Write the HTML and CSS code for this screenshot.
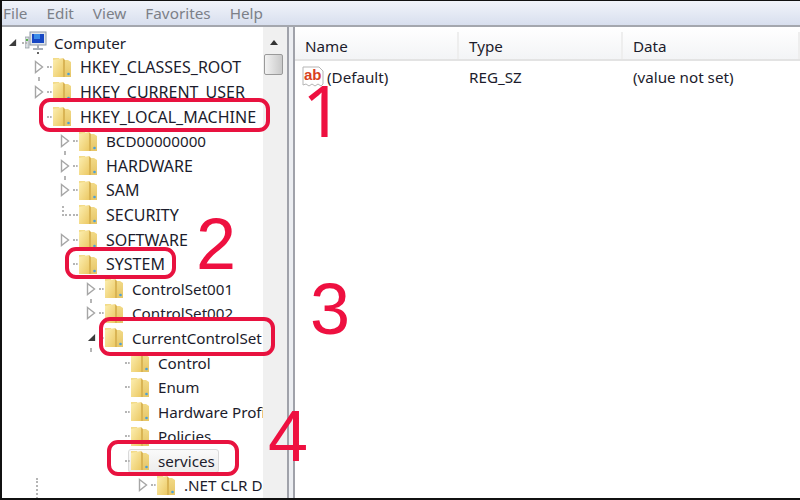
FILE: index.html
```html
<!DOCTYPE html>
<html lang="en">
<head>
  <meta charset="UTF-8">
  <title>Registry Editor</title>
  <link rel="stylesheet" href="styles.css">
</head>
<body>
  <svg class="defs" width="0" height="0">
    <defs>
      <linearGradient id="fold" x1="0" y1="0" x2="1" y2="1">
        <stop offset="0" stop-color="#fcefb2"/>
        <stop offset="1" stop-color="#ecc964"/>
      </linearGradient>
      <linearGradient id="foldBack" x1="0" y1="0" x2="0" y2="1">
        <stop offset="0" stop-color="#f3dc8a"/>
        <stop offset="1" stop-color="#e6c566"/>
      </linearGradient>
      <symbol id="folder" viewBox="0 0 18 21">
        <path d="M0 1h6l1 2h8l3 2v15H0z" fill="url(#foldBack)"/>
        <path d="M0 3l10-2v19H0z" fill="url(#fold)"/>
        <path d="M10 1l2 2v17h-2z" fill="#d9b454"/>
        <circle cx="15.5" cy="17" r="1.3" fill="#4aa0d8"/>
      </symbol>
      <symbol id="open" viewBox="0 0 10 14">
        <path d="M1.5 1.5l7 5.5-7 5.5z" fill="#fff" stroke="#a6a6a6" stroke-width="1.4"/>
      </symbol>
      <symbol id="shut" viewBox="0 0 10 10">
        <path d="M9 1v8H1z" fill="#3c3c3c"/>
      </symbol>
    </defs>
  </svg>

  <div class="window">
    <div class="menu">
      <span>File</span>
      <span>Edit</span>
      <span>View</span>
      <span>Favorites</span>
      <span>Help</span>
    </div>

    <div class="panes">
      <div class="tree">
        <div class="rows">
          <div class="row top">
            <svg class="arrow small"><use href="#shut"/></svg>
            <i class="dots short"></i>
            <svg class="computer" viewBox="0 0 22 24">
              <rect x="0" y="6" width="4" height="11" fill="#d9dde2" stroke="#8c949c" stroke-width=".7"/>
              <rect x="1" y="8" width="2" height="2" fill="#58b04a"/>
              <rect x="5" y="1" width="16" height="13" fill="#dfe5ec" stroke="#8f9aa6"/>
              <rect x="7" y="3" width="12" height="9" fill="#1747c4"/>
              <path d="M9 3h6v5H9z" fill="#3b8ce8"/>
              <path d="M12 14h2v3h-2zM8 17h10v2H8z" fill="#a8b0b8"/>
              <rect x="12" y="21" width="2" height="2" fill="#666"/>
            </svg>
            <span class="label">Computer</span>
          </div>
          <div class="row l1"><svg class="arrow"><use href="#open"/></svg><i class="dots stem"></i><svg class="folder"><use href="#folder"/></svg><span class="label caps">HKEY_CLASSES_ROOT</span></div>
          <div class="row l1"><svg class="arrow"><use href="#open"/></svg><i class="dots"></i><svg class="folder"><use href="#folder"/></svg><span class="label caps">HKEY_CURRENT_USER</span></div>
          <div class="row l1"><i class="arrow"></i><i class="dots"></i><svg class="folder"><use href="#folder"/></svg><span class="label caps">HKEY_LOCAL_MACHINE</span></div>
          <div class="row l2"><svg class="arrow"><use href="#open"/></svg><i class="dots stem"></i><svg class="folder"><use href="#folder"/></svg><span class="label">BCD00000000</span></div>
          <div class="row l2"><svg class="arrow"><use href="#open"/></svg><i class="dots stem"></i><svg class="folder"><use href="#folder"/></svg><span class="label caps">HARDWARE</span></div>
          <div class="row l2"><svg class="arrow"><use href="#open"/></svg><i class="dots"></i><svg class="folder"><use href="#folder"/></svg><span class="label caps">SAM</span></div>
          <div class="row l2"><i class="arrow"></i><i class="dots long"></i><svg class="folder"><use href="#folder"/></svg><span class="label caps">SECURITY</span></div>
          <div class="row l2"><svg class="arrow"><use href="#open"/></svg><i class="dots"></i><svg class="folder"><use href="#folder"/></svg><span class="label caps">SOFTWARE</span></div>
          <div class="row l2"><i class="arrow"></i><i class="dots"></i><svg class="folder"><use href="#folder"/></svg><span class="label caps">SYSTEM</span></div>
          <div class="row l3"><svg class="arrow"><use href="#open"/></svg><i class="dots stem"></i><svg class="folder"><use href="#folder"/></svg><span class="label">ControlSet001</span></div>
          <div class="row l3"><svg class="arrow"><use href="#open"/></svg><i class="dots"></i><svg class="folder"><use href="#folder"/></svg><span class="label">ControlSet002</span></div>
          <div class="row l3"><svg class="arrow small"><use href="#shut"/></svg><i class="dots stem"></i><svg class="folder"><use href="#folder"/></svg><span class="label">CurrentControlSet</span></div>
          <div class="row l4"><i class="arrow"></i><i class="dots"></i><svg class="folder"><use href="#folder"/></svg><span class="label">Control</span></div>
          <div class="row l4"><i class="arrow"></i><i class="dots"></i><svg class="folder"><use href="#folder"/></svg><span class="label">Enum</span></div>
          <div class="row l4"><i class="arrow"></i><i class="dots"></i><svg class="folder"><use href="#folder"/></svg><span class="label">Hardware Profiles</span></div>
          <div class="row l4"><i class="arrow"></i><i class="dots"></i><svg class="folder"><use href="#folder"/></svg><span class="label">Policies</span></div>
          <div class="row l4"><i class="arrow"></i><i class="dots"></i><span class="selected"><svg class="folder"><use href="#folder"/></svg><span class="label">services</span></span></div>
          <div class="row l5"><svg class="arrow"><use href="#open"/></svg><i class="dots far"></i><svg class="folder"><use href="#folder"/></svg><span class="label">.NET CLR Data</span></div>
        </div>
        <div class="scrollbar">
          <div class="up"></div>
          <div class="thumb"></div>
        </div>
      </div>

      <div class="list">
        <div class="head">
          <div class="col name">Name</div>
          <div class="col type">Type</div>
          <div class="col data">Data</div>
        </div>
        <div class="item">
          <div class="col name">
            <svg class="ab" viewBox="0 0 22 22">
              <path d="M1 1h16l4 4v13l-2 2-3-2-3 2-3-2-3 2-3-2-3 1z" fill="#fff" stroke="#b5b5b5"/>
              <text x="2" y="14" class="ab-text">ab</text>
            </svg>
            <span>(Default)</span>
          </div>
          <div class="col type">REG_SZ</div>
          <div class="col data">(value not set)</div>
        </div>
      </div>
    </div>

    <div class="mark m1"></div>
    <div class="mark m2"></div>
    <div class="mark m3"></div>
    <div class="mark m4"></div>
    <div class="num n1">1</div>
    <div class="num n2">2</div>
    <div class="num n3">3</div>
    <div class="num n4">4</div>
  </div>
</body>
</html>
```

FILE: styles.css
```css
html, body { margin:0; padding:0; background:#fff; }
.defs { position:absolute; }
.window {
  position:relative; width:800px; height:500px; overflow:hidden;
  box-sizing:border-box; display:flex; flex-direction:column;
  border-top:1px solid #111; border-bottom:2px solid #111; border-left:2px solid #111;
  font-family:"Noto Sans", "Open Sans", sans-serif; font-size:15.2px; color:#1c1c2c;
}

.menu {
  height:24px; flex:none; display:flex; gap:19px; padding-left:1px; align-items:center;
  background:linear-gradient(to bottom,#f1f4fa,#d8dfee);
  border-bottom:2px solid #a4a7ae;
  color:#7c8088; font-size:15.3px;
}

.panes { flex:1; display:flex; min-height:0; background:#eceef2; }

.tree {
  width:287px; flex:none; display:flex; box-sizing:border-box;
  border-right:2px solid #a0a2aa;
}
.rows { flex:1; min-width:0; overflow:hidden; padding-top:3.5px; background:#fff; }
.row { height:24.6px; display:flex; align-items:center; white-space:nowrap; }
.row.top { padding-left:5px; }
.l1 { padding-left:32px; }
.l2 { padding-left:58px; }
.l3 { padding-left:84px; }
.l4 { padding-left:110px; }
.l5 { padding-left:136px; }

.arrow { width:10px; height:14px; flex:none; }
.arrow.small { width:9px; height:9px; margin-left:1px; }
.dots { position:relative; width:5px; margin:0 1px 0 3px; flex:none; border-top:2px dotted #b5b5b5; }
.dots.short { width:3px; margin:0 0 0 5px; }
.dots.long { width:16px; margin-left:-8px; }
.dots.long::before,
.dots.stem::before,
.dots.far::before {
  content:""; position:absolute; border-left:2px dotted #b5b5b5;
}
.dots.long::before { left:0; top:-10px; height:10px; }
.dots.stem::before { left:-9px; top:9px; height:4px; }
.dots.far::before { left:-115px; top:-8px; height:24px; }
.folder { width:18px; height:21px; flex:none; margin-right:9px; }
.computer { width:22px; height:24px; flex:none; margin:0 7px 0 0; }
.label { line-height:20px; }
.caps { font-size:16px; }
.selected {
  display:flex; align-items:center; box-sizing:border-box; height:24px;
  background:linear-gradient(to bottom,#fafafa,#ececec);
  border:1px solid #d9d9d9; border-radius:3px;
  padding:0 3px 0 2px; margin-left:-3px;
}

.scrollbar { width:24px; flex:none; background:#f0f0f0; position:relative; }
.up {
  width:0; height:0; margin:13px 0 0 7px;
  border-left:4px solid transparent; border-right:4px solid transparent;
  border-bottom:5px solid #333;
}
.thumb {
  width:17px; height:19px; margin:9px 0 0 1px;
  background:linear-gradient(to right,#f2f2f2,#c9c9c9);
  border:1px solid #9a9a9a; border-radius:2px;
}

.list {
  flex:1; margin-left:4px; border-left:2px solid #a0a2aa; background:#fff;
}
.head {
  height:34px; padding-top:5px; display:flex; align-items:center; box-sizing:border-box;
  background:linear-gradient(to bottom,#fff,#f3f4f6);
  border-bottom:2px solid #e3e3e3;
}
.head .col { height:100%; display:flex; align-items:center; border-right:2px solid #eeeeee; box-sizing:border-box; }
.item { display:flex; align-items:center; height:30px; margin-top:1px; }
.col { flex:none; padding-left:10px; box-sizing:border-box; }
.col.name { width:164px; }
.col.type { width:164px; }
.col.data { flex:1; }
.item .col.name { display:flex; align-items:center; padding-left:7px; }
.ab { width:22px; height:22px; margin-right:3px; flex:none; }
.ab-text { font:bold 15px "Liberation Sans", sans-serif; fill:#d8401c; }

.mark {
  position:absolute; box-sizing:border-box;
  border:4px solid #e8123f; border-radius:11px;
}
.m1 { left:37px; top:97px; width:231px; height:34px; }
.m2 { left:63px; top:246px; width:111px; height:32px; }
.m3 { left:97px; top:316px; width:176px; height:39px; }
.m4 { left:105px; top:439px; width:132px; height:36px; }

.num {
  position:absolute; color:#ee1040; line-height:1;
  font-family:"Liberation Sans", sans-serif; font-size:72px;
}
.n1 { left:300px; top:72px; font-family:"Noto Sans", sans-serif; }
.n2 { left:194px; top:207px; }
.n3 { left:308px; top:272px; }
.n4 { left:266px; top:399px; }
```
